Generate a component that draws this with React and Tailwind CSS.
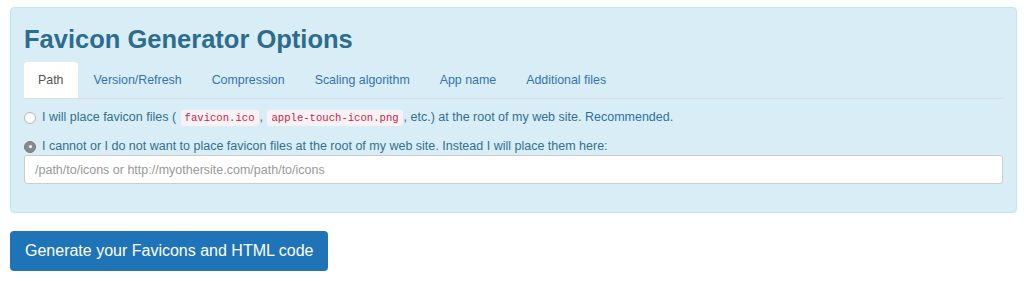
import { useState } from "react";

const TABS = ["Path", "Version/Refresh", "Compression", "Scaling algorithm", "App name", "Additional files"];

function Code({ children }) {
  return (
    <code className="inline-block px-[4px] py-[2px] mx-[1px] rounded-[3px] bg-[#f9f2f4] text-[#c7254e] text-[10.6px] leading-[12px] font-['Liberation_Mono',monospace]">
      {children}
    </code>
  );
}

function Radio({ checked, onClick }) {
  return (
    <span
      onClick={onClick}
      className={`inline-flex items-center justify-center w-[12px] h-[12px] rounded-full shrink-0 ${
        checked ? "bg-[#8a8a8a] border border-[#7a7a7a]" : "bg-white border border-[#b5b5b5]"
      }`}
    >
      {checked && <span className="w-[3px] h-[3px] rounded-full bg-white" />}
    </span>
  );
}

export default function App() {
  const [tab, setTab] = useState(0);
  const [choice, setChoice] = useState(1);

  return (
    <div className="min-h-screen bg-white pt-[7px] pl-[10px] pr-[7px] font-['Liberation_Sans',Arial,sans-serif]">
      {/* Options panel */}
      <div className="bg-[#d9edf7] border border-[#bce8f1] rounded-[4px] pt-[16px] pb-[28px] pl-[13px] pr-[13px]">
        <h2 className="text-[25.5px] leading-[30px] font-bold text-[#2c6c8e]">Favicon Generator Options</h2>

        <ul className="mt-[8px] flex border-b border-[#dadfe2] h-[37px]">
          {TABS.map((t, i) => (
            <li key={t} className="mr-[2px]">
              <button
                onClick={() => setTab(i)}
                className={`h-[36px] px-[14px] text-[12.4px] rounded-t-[4px] ${
                  i === tab ? "bg-white text-[#555]" : "text-[#3173b1]"
                }`}
              >
                {t}
              </button>
            </li>
          ))}
        </ul>

        <div className="mt-[10px] flex items-center gap-[6px] text-[12.5px] leading-[17px] text-[#31708f]">
          <Radio checked={choice === 0} onClick={() => setChoice(0)} />
          <span>
            I will place favicon files ( <Code>favicon.ico</Code>, <Code>apple-touch-icon.png</Code>, etc.) at the root of my web site.{" "}
            <a className="text-[#2f6fa8]">Recommended.</a>
          </span>
        </div>

        <div className="mt-[12px] flex items-center gap-[6px] text-[12.5px] leading-[17px] text-[#31708f]">
          <Radio checked={choice === 1} onClick={() => setChoice(1)} />
          <span>I cannot or I do not want to place favicon files at the root of my web site. Instead I will place them here:</span>
        </div>

        <input
          type="text"
          placeholder="/path/to/icons or http://myothersite.com/path/to/icons"
          className="w-full h-[29px] px-[10px] bg-white border border-[#ccc] rounded-[3px] text-[12.5px] text-[#555] placeholder-[#999] outline-none"
        />
      </div>

      <button className="mt-[18px] h-[40px] px-[15px] rounded-[4px] bg-[#1f74b7] text-white text-[16px]">
        Generate your Favicons and HTML code
      </button>
    </div>
  );
}
